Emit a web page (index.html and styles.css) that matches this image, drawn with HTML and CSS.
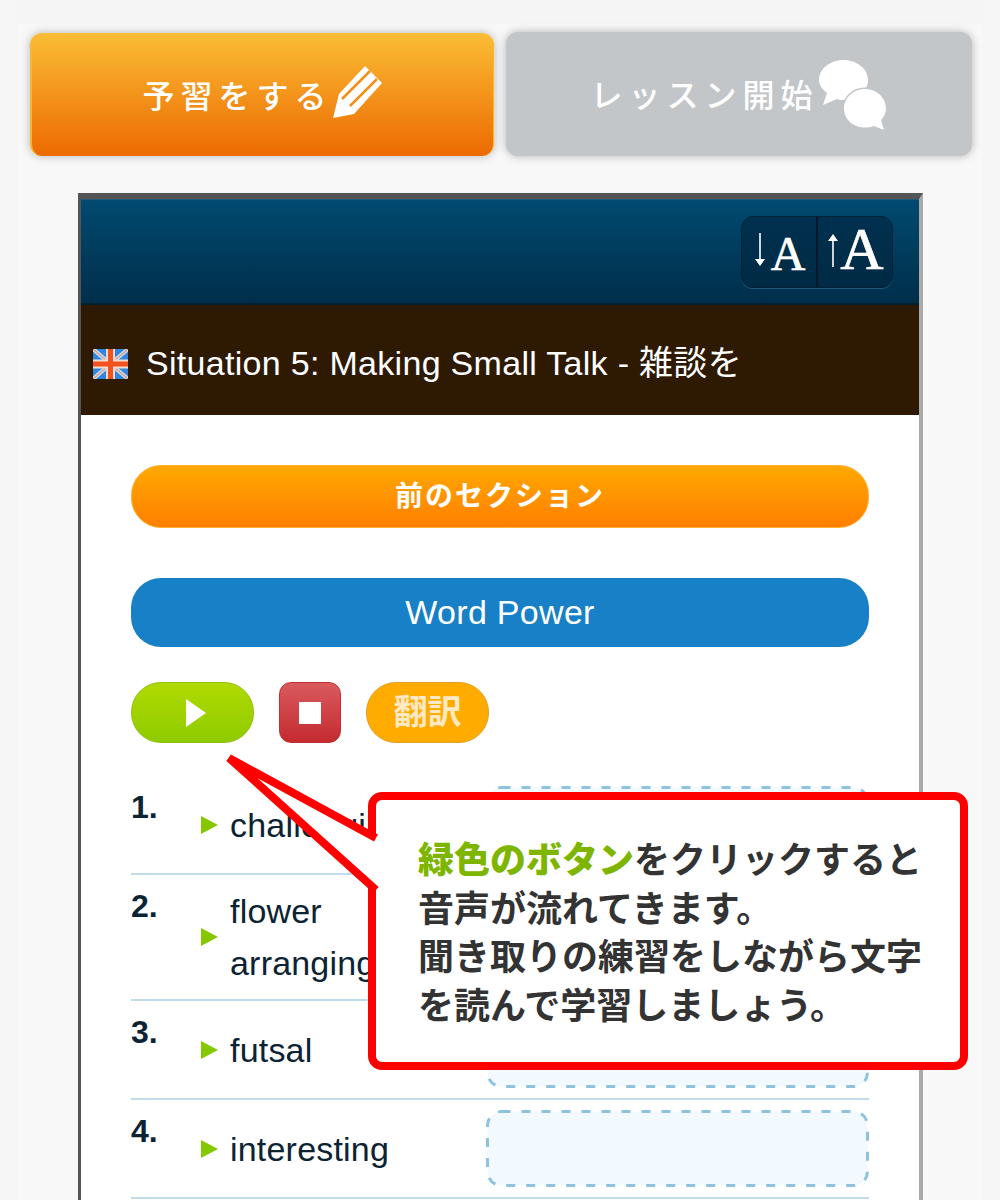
FILE: index.html
```html
<!DOCTYPE html>
<html lang="ja">
<head>
<meta charset="utf-8">
<title>Lesson</title>
<link rel="stylesheet" href="styles.css">
</head>
<body>
<svg class="defs" width="0" height="0"><defs><symbol id="dash-box" viewBox="0 0 383 77"><rect x="1.500" y="1.500" width="380" height="74" rx="14" fill="#f3faff" stroke="#8fc2dc" stroke-width="3" stroke-dasharray="9 11"/></symbol></defs></svg>
<div class="page">
  <div class="top-buttons">
    <a class="top-btn top-btn-orange">
      <span class="top-label">予習をする</span>
      <svg class="pencil" viewBox="0 0 50 54" width="50" height="54"><path d="M0 52 L6 28 L32 0 L49 17 L21 48 Z" fill="#fff"/><path d="M37 5 L9 33 M44 13 L17 40" stroke="#f18f16" stroke-width="2.500" fill="none"/></svg>
    </a>
    <a class="top-btn top-btn-gray">
      <span class="top-label">レッスン開始</span>
      <svg class="bubbles" viewBox="0 0 70 72" width="70" height="72"><path d="M4 45 L8 33 C3 29 0 25 0 20 C0 9 11 0 24.500 0 C38 0 49 9 49 20 C49 31 38 40 24.500 40 C22 40 20 40 18 39 Z" fill="#fff"/><path d="M65 70 L55 66 C52 67 49 67.500 46 67.500 C34 67.500 25 59 25 48.500 C25 38 34 29 46 29 C58 29 67 38 67 48.500 C67 53 65 57 62 60 Z" fill="#fff" stroke="#c3c6c9" stroke-width="3" paint-order="stroke"/></svg>
    </a>
  </div>

  <div class="panel">
    <div class="toolbar">
      <div class="font-tools">
        <span class="font-tool font-tool-small">
          <svg class="arrow" viewBox="0 0 14 34" width="14" height="34"><path d="M6.200 0H7.800V26L12 26L7 33L2 26L6.200 26Z" fill="#fff"/></svg>
          <span class="font-a font-a-small">A</span>
        </span>
        <span class="font-tool font-tool-large">
          <svg class="arrow" viewBox="0 0 14 34" width="14" height="34"><path d="M6.200 34H7.800V8L12 8L7 1L2 8L6.200 8Z" fill="#fff"/></svg>
          <span class="font-a font-a-large">A</span>
        </span>
      </div>
    </div>
    <div class="title-bar">
      <svg class="flag" viewBox="0 0 35 30" width="35" height="30">
        <rect width="35" height="30" fill="#2f86e0"/>
        <path d="M0 0L35 30M35 0L0 30" stroke="#c9d6e6" stroke-width="4"/>
        <path d="M0 0L35 30M35 0L0 30" stroke="#f0805a" stroke-width="1"/>
        <path d="M17.500 0V30M0 15H35" stroke="#f0dcd0" stroke-width="9"/>
        <path d="M17.500 0V30M0 15H35" stroke="#f4521c" stroke-width="5"/>
      </svg>
      <span class="title-text">Situation 5: Making Small Talk - 雑談を</span>
    </div>
    <div class="content">
      <a class="pill pill-orange">前のセクション</a>
      <a class="pill pill-blue">Word Power</a>
      <div class="controls">
        <span class="ctl ctl-play"><svg viewBox="0 0 20 28" width="20" height="28"><path d="M0 0L20 14L0 28Z" fill="#fff"/></svg></span>
        <span class="ctl ctl-stop"><span class="stop-square"></span></span>
        <span class="ctl ctl-trans">翻訳</span>
      </div>
      <ol class="words">
        <li class="word-row"><b class="num">1.</b><span class="word"><i class="tri"></i><span class="word-text">challenging</span></span><svg class="answer"><use href="#dash-box"/></svg></li>
        <li class="word-row"><b class="num">2.</b><span class="word"><i class="tri"></i><span class="word-text">flower<br>arranging</span></span><svg class="answer"><use href="#dash-box"/></svg></li>
        <li class="word-row"><b class="num">3.</b><span class="word"><i class="tri"></i><span class="word-text">futsal</span></span><svg class="answer"><use href="#dash-box"/></svg></li>
        <li class="word-row"><b class="num">4.</b><span class="word"><i class="tri"></i><span class="word-text">interesting</span></span><svg class="answer"><use href="#dash-box"/></svg></li>
      </ol>
    </div>
  </div>
</div>

<svg class="tail" viewBox="0 0 160 150" width="160" height="150"><path d="M150 86 L3 6 L150 138" fill="#fff" stroke="#f00" stroke-width="8" stroke-linejoin="miter"/></svg>
<div class="callout">
  <p class="callout-text"><strong class="green">緑色のボタン</strong>をクリックすると<br>音声が流れてきます。<br>聞き取りの練習をしながら文字<br>を読んで学習しましょう。</p>
</div>
</body>
</html>
```

FILE: styles.css
```css
* { box-sizing: border-box; }
html, body { margin: 0; height: 1200px; overflow: hidden; }
body {
  background: #f6f6f6;
  font-family: "Liberation Sans", "Noto Sans CJK JP", sans-serif;
  position: relative;
}
.defs { position: absolute; }
.page {
  margin: 0 18px;
  height: 1200px;
  background: linear-gradient(#f5f5f5 24px, #f8f8f8 24px);
  padding-top: 32px;
}
.top-buttons {
  display: flex;
  gap: 12px;
  padding: 0 10px 0 12px;
}
.top-btn {
  height: 124px;
  border-radius: 12px;
  display: flex;
  align-items: center;
  justify-content: center;
  color: #fff;
  box-shadow: 0 0 10px rgba(0,0,0,.28);
}
.top-btn-orange {
  width: 464px;
  height: 123px;
  margin-top: 1px;
  background: linear-gradient(#fbbd36, #ec6a00);
  border: 2px solid #fbb52f;
  border-top: 0;
  border-bottom: 0;
  border-right-width: 1px;
}
.top-btn-gray { width: 466px; background: #c3c6c9; }
.top-label {
  font-family: "Noto Sans CJK JP", sans-serif;
  font-size: 32px;
  font-weight: 500;
  letter-spacing: 6px;
  margin-top: -2px;
}
.pencil { margin-top: -4px; }
.bubbles { margin-top: 4px; margin-right: -1px; }
.panel {
  width: 845px;
  margin: 37px 0 0 60px;
  border-top: 6px solid #555;
  border-left: 3px solid #555;
  border-right: 4px solid #aaa;
  background: #fff;
  height: 1010px;
}
.toolbar {
  height: 106px;
  background: linear-gradient(#004a70, #002e4a);
  border-top: 1px solid #1d5a7c;
  border-bottom: 2px solid #01202f;
  display: flex;
  justify-content: flex-end;
  padding: 16px 26px 0 0;
}
.font-tools {
  display: flex;
  width: 152px;
  height: 72px;
  background: linear-gradient(#00314f, #002a44);
  border: 1px solid #012136;
  border-radius: 12px;
  box-shadow: 0 1px 0 #1d5a7c;
}
.font-tool {
  flex: 1;
  display: flex;
  align-items: center;
  justify-content: center;
}
.font-tool-small { gap: 4px; }
.font-tool-large { gap: 0; border-left: 2px solid #011a2b; }
.arrow { margin-top: -4px; }
.font-a {
  font-family: "Liberation Serif", serif;
  color: #fff;
  line-height: 1;
  -webkit-text-stroke: .6px #fff;
}
.font-a-small { font-size: 48px; margin-top: 4px; }
.font-a-large { font-size: 60px; margin-top: -6px; }
.title-bar {
  height: 110px;
  background: #2e1a03;
  display: flex;
  align-items: center;
  padding-left: 12px;
  color: #fff;
}
.flag { margin-top: 8px; flex: none; }
.title-text {
  margin-left: 18px;
  font-size: 34px;
  letter-spacing: .3px;
  line-height: 1;
  margin-top: 6px;
  white-space: nowrap;
}
.content { padding: 50px 50px 0; }
.pill {
  display: flex;
  align-items: center;
  justify-content: center;
  color: #fff;
  border-radius: 30px;
}
.pill-orange {
  height: 63px;
  padding-bottom: 6px;
  background: linear-gradient(#ffa800, #ff7f00);
  border: 1px solid #ffb02e;
  font-family: "Noto Sans CJK JP", sans-serif;
  font-size: 28px;
  font-weight: 700;
  letter-spacing: 2px;
}
.pill-blue {
  margin-top: 50px;
  height: 69px;
  background: #1880c6;
  font-size: 34px;
  letter-spacing: .3px;
}
.controls {
  display: flex;
  gap: 25px;
  margin-top: 35px;
}
.ctl {
  height: 61px;
  display: flex;
  align-items: center;
  justify-content: center;
  color: #fff;
}
.ctl-play {
  width: 123px;
  padding-left: 6px;
  border-radius: 30px;
  background: linear-gradient(#b0da00, #8ecb00);
  border: 1px solid #8fbf10;
}
.ctl-stop {
  width: 62px;
  border-radius: 12px;
  background: linear-gradient(#d95a5e, #c42b2f);
  border: 1px solid #bd3034;
}
.stop-square { width: 22px; height: 22px; background: #fff; }
.ctl-trans {
  width: 123px;
  padding-bottom: 6px;
  border-radius: 30px;
  background: #ffab00;
  border: 1px solid #e3a020;
  font-family: "Noto Sans CJK JP", sans-serif;
  font-size: 34px;
  font-weight: 700;
  color: #ffe9c4;
}
.words {
  list-style: none;
  margin: 33px 0 0;
  padding: 0;
}
.word-row {
  display: grid;
  grid-template-columns: 70px 285px 383px;
  padding: 10px 0;
  border-bottom: 2px solid #c1dbea;
  color: #0c2333;
}
.num {
  font-size: 32px;
  line-height: 42px;
}
.word {
  display: flex;
  align-items: center;
  font-size: 34px;
  letter-spacing: .2px;
  line-height: 52px;
}
.tri {
  flex: none;
  width: 0;
  height: 0;
  border-left: 17px solid #85c800;
  border-top: 9px solid transparent;
  border-bottom: 9px solid transparent;
  margin-right: 12px;
}
.word-text { display: block; }
.answer {
  width: 383px;
  height: 77px;
  align-self: center;
  justify-self: end;
}
.callout {
  position: absolute;
  left: 368px;
  top: 792px;
  width: 600px;
  height: 278px;
  background: #fff;
  border: 8px solid #f00;
  border-radius: 14px;
  padding: 33px 0 0 42px;
}
.callout-text {
  margin: 0;
  font-family: "Noto Sans CJK JP", sans-serif;
  font-size: 36px;
  font-weight: 700;
  line-height: 48.500px;
  color: #333;
  white-space: nowrap;
}
.green { color: #7eb500; font-weight: 900; }
.tail {
  position: absolute;
  left: 226px;
  top: 752px;
  z-index: 1;
}
```
